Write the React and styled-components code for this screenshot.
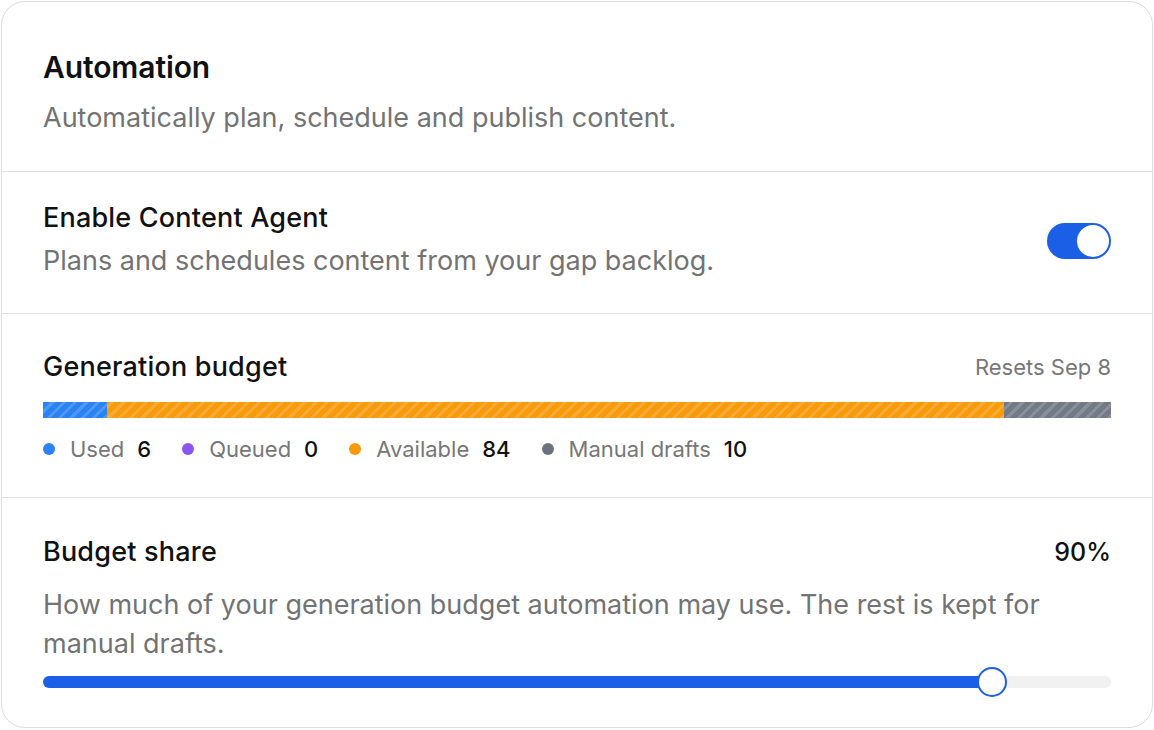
import styled, { createGlobalStyle } from 'styled-components';

const GlobalStyle = createGlobalStyle`
  * { box-sizing: border-box; }
  body {
    margin: 0;
    background: #fff;
    font-family: Inter, "Noto Sans", sans-serif;
    -webkit-font-smoothing: antialiased;
  }
  #root { padding: 1px; }
`;

const Card = styled.div`
  border: 1px solid #dcdcdc;
  border-radius: 24px;
  background: #fff;
  color: #111;
  overflow: hidden;
`;

const Section = styled.div`
  display: flex;
  flex-direction: column;
  padding: ${p => p.$pad};
  border-bottom: ${p => (p.$last ? 'none' : '1px solid #e2e2e2')};
`;

const Row = styled.div`
  display: flex;
  align-items: center;
  justify-content: space-between;
  gap: 24px;
`;

const Heading = styled.h2`
  margin: 0;
  font-size: 30px;
  line-height: 36px;
  font-weight: 600;
  letter-spacing: -0.1px;
`;

const Title = styled.div`
  font-size: 27px;
  line-height: 28px;
  font-weight: 500;
  letter-spacing: 0.2px;
`;

const Text = styled.p`
  margin: ${p => p.$mt || 0}px 0 0;
  font-size: 27px;
  line-height: ${p => p.$lh || 34}px;
  color: #737373;
`;

const Meta = styled.span`
  font-size: 22px;
  color: #777;
`;

const Value = styled.span`
  font-size: 25px;
  font-weight: 500;
`;

const Switch = styled.div`
  flex: none;
  width: 64px;
  height: 36px;
  border-radius: 18px;
  background: #1a5fe6;
  display: flex;
  align-items: center;
  justify-content: ${p => (p.$on ? 'flex-end' : 'flex-start')};
  padding: 2px;
`;

const Knob = styled.div`
  width: 32px;
  height: 32px;
  border-radius: 50%;
  background: #fff;
`;

const Bar = styled.div`
  display: flex;
  height: 16px;
  margin-top: 21px;
  overflow: hidden;
`;

const Segment = styled.div`
  background-color: ${p => p.$color};
  background-image: repeating-linear-gradient(
    -45deg,
    rgba(255, 255, 255, 0.16) 0 3px,
    transparent 3px 8px
  );
`;

const Legend = styled.div`
  display: flex;
  align-items: center;
  gap: 31px;
  margin-top: 17px;
  height: 28px;
`;

const LegendItem = styled.div`
  display: flex;
  align-items: center;
  font-size: 22px;
`;

const Dot = styled.span`
  width: 12px;
  height: 12px;
  border-radius: 50%;
  background: ${p => p.$color};
  margin-right: 15px;
`;

const LegendLabel = styled.span`
  color: #777;
  margin-right: 13px;
`;

const LegendCount = styled.span`
  color: #111;
  font-weight: 500;
`;

const Slider = styled.div`
  position: relative;
  height: 30px;
  margin-top: 4px;
  display: flex;
  align-items: center;
`;

const Track = styled.div`
  width: 100%;
  height: 12px;
  border-radius: 6px;
  background: #f1f1f1;
  overflow: hidden;
`;

const Fill = styled.div`
  height: 100%;
  background: #1a5fe6;
`;

const Thumb = styled.div`
  position: absolute;
  top: 0;
  width: 30px;
  height: 30px;
  margin-left: -15px;
  border-radius: 50%;
  background: #fff;
  border: 2px solid #1a5fe6;
`;

const segments = [
  { key: 'used', label: 'Used', count: 6, color: '#2b83f3', bar: '#2b83f3' },
  { key: 'queued', label: 'Queued', count: 0, color: '#8b55f0', bar: '#8b55f0' },
  { key: 'available', label: 'Available', count: 84, color: '#f79a0c', bar: '#f79a0c' },
  { key: 'manual', label: 'Manual drafts', count: 10, color: '#6b7280', bar: '#737a86' },
];

const total = segments.reduce((s, x) => s + x.count, 0);
const share = 90;
// thumb centre travels inside the track, inset by its radius
const thumbAt = `calc(15px + (100% - 30px) * ${share / 100})`;

export default function App() {
  return (
    <>
      <GlobalStyle />
      <Card>
        <Section $pad="47px 41px 36px">
          <Heading>Automation</Heading>
          <Text $mt={16}>Automatically plan, schedule and publish content.</Text>
        </Section>

        <Section $pad="32px 41px 35px">
          <Row>
            <div>
              <Title>Enable Content Agent</Title>
              <Text $mt={12}>Plans and schedules content from your gap backlog.</Text>
            </div>
            <Switch $on>
              <Knob />
            </Switch>
          </Row>
        </Section>

        <Section $pad="39px 41px 34px">
          <Row>
            <Title>Generation budget</Title>
            <Meta>Resets Sep 8</Meta>
          </Row>
          <Bar>
            {segments.filter(s => s.count > 0).map(s => (
              <Segment
                key={s.key}
                $color={s.bar}
                style={{ width: `${(s.count / total) * 100}%` }}
              />
            ))}
          </Bar>
          <Legend>
            {segments.map(s => (
              <LegendItem key={s.key}>
                <Dot $color={s.color} />
                <LegendLabel>{s.label}</LegendLabel>
                <LegendCount>{s.count}</LegendCount>
              </LegendItem>
            ))}
          </Legend>
        </Section>

        <Section $pad="39px 41px 30px" $last>
          <Row>
            <Title>Budget share</Title>
            <Value>{share}%</Value>
          </Row>
          <Text $mt={18} $lh={39}>
            How much of your generation budget automation may use. The rest is kept for
            manual drafts.
          </Text>
          <Slider>
            <Track>
              <Fill style={{ width: thumbAt }} />
            </Track>
            <Thumb style={{ left: thumbAt }} />
          </Slider>
        </Section>
      </Card>
    </>
  );
}
